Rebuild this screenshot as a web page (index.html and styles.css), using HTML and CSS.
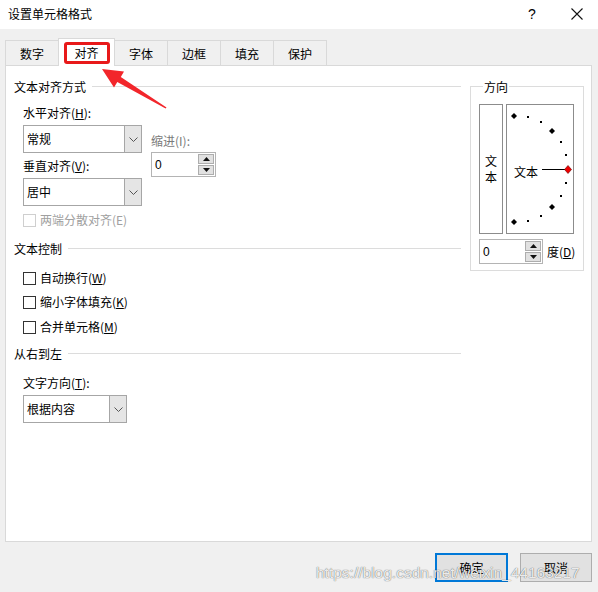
FILE: index.html
```html
<!DOCTYPE html>
<html lang="zh-CN">
<head>
<meta charset="utf-8">
<title>设置单元格格式</title>
<link rel="stylesheet" href="styles.css">
</head>
<body>
<div class="window">
  <div class="titlebar">
    <span class="title">设置单元格格式</span>
    <span class="help">?</span>
    <svg class="close" width="12" height="12" viewBox="0 0 12 12"><path d="M0.5 0.5 L11.5 11.5 M11.5 0.5 L0.5 11.5" stroke="#111" stroke-width="1.1" fill="none"/></svg>
  </div>

  <div class="tabs">
    <div class="tab">数字</div>
    <div class="tab active"><span class="mark">对齐</span></div>
    <div class="tab">字体</div>
    <div class="tab">边框</div>
    <div class="tab">填充</div>
    <div class="tab">保护</div>
  </div>

  <div class="panel">
    <div class="left">
      <div class="group-head"><span>文本对齐方式</span><i></i></div>
      <div class="align-block">
        <div class="col">
          <div class="lbl">水平对齐(<u>H</u>):</div>
          <div class="select sel-wide"><span class="val">常规</span><span class="drop"><svg width="9" height="5" viewBox="0 0 9 5"><path d="M0.5 0.5 L4.5 4.5 L8.5 0.5" stroke="#555" fill="none"/></svg></span></div>
          <div class="lbl lbl-gap">垂直对齐(<u>V</u>):</div>
          <div class="select sel-wide"><span class="val">居中</span><span class="drop"><svg width="9" height="5" viewBox="0 0 9 5"><path d="M0.5 0.5 L4.5 4.5 L8.5 0.5" stroke="#555" fill="none"/></svg></span></div>
        </div>
        <div class="indent">
          <div class="lbl muted">缩进(I):</div>
          <div class="spin spin-indent">
            <span class="val">0</span>
            <span class="spin-btns">
              <span class="sbtn"><svg width="7" height="4" viewBox="0 0 7 4"><path d="M0 4 L3.5 0 L7 4 Z" fill="#111"/></svg></span>
              <span class="sbtn"><svg width="7" height="4" viewBox="0 0 7 4"><path d="M0 0 L3.5 4 L7 0 Z" fill="#111"/></svg></span>
            </span>
          </div>
        </div>
      </div>
      <div class="check disabled first-check"><span class="box"></span><span>两端分散对齐(E)</span></div>

      <div class="group-head head2"><span>文本控制</span><i></i></div>
      <div class="check c1"><span class="box"></span><span>自动换行(<u>W</u>)</span></div>
      <div class="check c2"><span class="box"></span><span>缩小字体填充(<u>K</u>)</span></div>
      <div class="check c3"><span class="box"></span><span>合并单元格(<u>M</u>)</span></div>

      <div class="group-head head3"><span>从右到左</span><i></i></div>
      <div class="lbl lbl-t">文字方向(<u>T</u>):</div>
      <div class="select sel-narrow"><span class="val">根据内容</span><span class="drop"><svg width="9" height="5" viewBox="0 0 9 5"><path d="M0.5 0.5 L4.5 4.5 L8.5 0.5" stroke="#555" fill="none"/></svg></span></div>
    </div>

    <div class="orient">
      <div class="orient-title">方向</div>
      <div class="orient-boxes">
        <div class="vbox"><span>文</span><span>本</span></div>
        <div class="dial">
          <svg width="66" height="128" viewBox="0 0 66 128">
            <g fill="#000">
              <path d="M7 8 L10 11 L7 14 L4 11 Z"/>
              <path d="M45 23 L48 26 L45 29 L42 26 Z"/>
              <path d="M45 99 L48 102 L45 105 L42 102 Z"/>
              <path d="M7 114 L10 117 L7 120 L4 117 Z"/>
              <rect x="20" y="11" width="2" height="2"/>
              <rect x="33" y="16" width="2" height="2"/>
              <rect x="53" y="36" width="2" height="2"/>
              <rect x="58" y="49" width="2" height="2"/>
              <rect x="58" y="77" width="2" height="2"/>
              <rect x="53" y="90" width="2" height="2"/>
              <rect x="33" y="110" width="2" height="2"/>
              <rect x="20" y="115" width="2" height="2"/>
            </g>
            <line x1="35" y1="64.5" x2="59" y2="64.5" stroke="#000" stroke-width="1"/>
            <path d="M61 60.5 L64.5 64.5 L61 68.5 L57.5 64.5 Z" fill="#e00" stroke="#600" stroke-width="0.6"/>
            <text x="7" y="72" class="dial-text">文本</text>
          </svg>
        </div>
      </div>
      <div class="deg-row">
        <div class="spin spin-deg">
          <span class="val">0</span>
          <span class="spin-btns">
            <span class="sbtn"><svg width="7" height="4" viewBox="0 0 7 4"><path d="M0 4 L3.5 0 L7 4 Z" fill="#111"/></svg></span>
            <span class="sbtn"><svg width="7" height="4" viewBox="0 0 7 4"><path d="M0 0 L3.5 4 L7 0 Z" fill="#111"/></svg></span>
          </span>
        </div>
        <span class="deg-lbl">度(<u>D</u>)</span>
      </div>
    </div>
  </div>

  <div class="footer">
    <button class="btn primary">确定</button>
    <button class="btn">取消</button>
  </div>

  <div class="watermark">https://blog.csdn.net/weixin_44163217</div>

  <svg class="arrow" width="598" height="592" viewBox="0 0 598 592">
    <polygon points="102,69 124,71.5 120.8,77 166.5,107.5 165.6,108.6 117.3,82 114,87.5" fill="#f2262b"/>
  </svg>
</div>
</body>
</html>
```
FILE: styles.css
```css
* { box-sizing: border-box; }
body {
  margin: 0;
  font-family: "Noto Sans CJK SC", "Microsoft YaHei", sans-serif;
  font-size: 12px;
  color: #000;
}
u { text-decoration: underline; text-underline-offset: 1px; }

.window {
  position: relative;
  width: 598px;
  height: 592px;
  background: #f0f0f0;
  overflow: hidden;
}

/* title bar */
.titlebar {
  height: 29px;
  background: #fff;
  display: flex;
  align-items: center;
  padding-left: 8px;
  padding-right: 15px;
}
.title { flex: 1; line-height: 16px; margin-top: -1px; }
.help {
  font-family: "Liberation Sans", sans-serif;
  font-size: 14px;
  line-height: 16px;
  width: 8px;
  margin-right: 35px;
  margin-top: -2px;
}
.close { display: block; margin-top: -2px; }

/* tabs */
.tabs {
  height: 36px;
  display: flex;
  align-items: flex-end;
  padding-left: 5px;
}
.tab {
  height: 25px;
  width: 54px;
  margin-right: -1px;
  border: 1px solid #d9d9d9;
  border-bottom: none;
  background: #f0f0f0;
  display: flex;
  align-items: center;
  justify-content: center;
  line-height: 16px;
  padding-top: 1px;
}
.tab.active {
  position: relative;
  z-index: 2;
  height: 28px;
  width: 57px;
  margin-bottom: -1px;
  background: #fff;
  align-items: flex-start;
  padding-top: 3px;
}
.mark {
  display: flex;
  align-items: center;
  justify-content: center;
  width: 46px;
  height: 22px;
  border: 3px solid #e8191a;
  border-radius: 3px;
}

/* panel */
.panel {
  margin: 0 6px 0 5px;
  height: 477px;
  border: 1px solid #d9d9d9;
  background: #fff;
  display: flex;
  align-items: flex-start;
  padding: 13px 7px 0 8px;
}
.left { width: 447px; }

.group-head {
  display: flex;
  align-items: center;
  line-height: 16px;
}
.group-head i {
  flex: 1;
  height: 1px;
  background: #dcdcdc;
  margin-left: 6px;
  margin-top: -1px;
}
.head2 { margin-top: 13px; }
.head3 { margin-top: 11px; }

.lbl { line-height: 16px; }
.lbl-gap { margin-top: 5px; }
.muted { color: #7a7a7a; }

.align-block {
  display: flex;
  align-items: flex-start;
  margin: 10px 0 0 9px;
}
.col { width: 119px; }
.indent { margin-left: 9px; padding-top: 28px; }

.select {
  margin-top: 4px;
  height: 28px;
  border: 1px solid #a6a6a6;
  background: #fff;
  display: flex;
  align-items: stretch;
}
.sel-wide { width: 119px; }
.sel-narrow { width: 104px; margin-left: 9px; }
.select .val {
  flex: 1;
  padding-left: 3px;
  display: flex;
  align-items: center;
  line-height: 16px;
}
.select .drop {
  width: 17px;
  border-left: 1px solid #a6a6a6;
  background: #e5e5e5;
  display: flex;
  align-items: center;
  justify-content: center;
}
.select .drop svg { display: block; }

.spin {
  height: 25px;
  border: 1px solid #b4b4b4;
  background: #fff;
  display: flex;
  align-items: stretch;
  padding: 1px;
}
.spin-indent { width: 65px; margin-top: 3px; }
.spin-deg { width: 64px; }
.spin .val {
  flex: 1;
  padding-left: 2px;
  display: flex;
  align-items: center;
  font-family: "Liberation Sans", sans-serif;
  font-size: 12px;
}
.spin-btns {
  width: 16px;
  display: flex;
  flex-direction: column;
  gap: 1px;
}
.sbtn {
  flex: 1;
  border: 1px solid #adadad;
  background: #e1e1e1;
  display: flex;
  align-items: center;
  justify-content: center;
}
.sbtn svg { display: block; }

/* checkboxes */
.check {
  display: flex;
  align-items: center;
  line-height: 16px;
  margin-left: 9px;
}
.check .box {
  width: 13px;
  height: 13px;
  border: 1px solid #333;
  background: #fff;
  margin-right: 4px;
}
.check.disabled { color: #a0a0a0; }
.check.disabled .box { border-color: #cfcfcf; }
.first-check { margin-top: 6px; }
.c1 { margin-top: 13px; }
.c2 { margin-top: 8px; }
.c3 { margin-top: 9px; }
.lbl-t { margin: 13px 0 0 9px; }

/* orientation group */
.orient {
  width: 114px;
  margin-left: 9px;
  margin-top: 7px;
  border: 1px solid #dcdcdc;
  padding: 0 0 6px 8px;
}
.orient-title {
  width: fit-content;
  margin: -8px 0 0 4px;
  padding: 0 1px;
  background: #fff;
  line-height: 16px;
}
.orient-boxes {
  display: flex;
  gap: 3px;
  margin-top: 9px;
}
.vbox {
  width: 24px;
  height: 130px;
  border: 1px solid #8c8c8c;
  display: flex;
  flex-direction: column;
  align-items: center;
  justify-content: center;
  line-height: 16px;
}
.dial {
  width: 68px;
  height: 130px;
  border: 1px solid #8c8c8c;
}
.dial svg { display: block; }
.dial-text { font-family: "Noto Sans CJK SC", sans-serif; font-size: 12px; }

.deg-row {
  display: flex;
  align-items: center;
  margin-top: 5px;
}
.deg-lbl { margin-left: 4px; line-height: 16px; }

/* footer */
.footer {
  display: flex;
  justify-content: flex-end;
  gap: 12px;
  padding: 11px 6px 0 0;
}
.btn {
  font-family: "Noto Sans CJK SC", sans-serif;
  font-size: 12px;
  color: #000;
  height: 29px;
  width: 72px;
  background: #e1e1e1;
  border: 1px solid #adadad;
  padding: 0;
}
.btn.primary {
  width: 73px;
  border: 2px solid #0078d7;
}

.watermark {
  position: absolute;
  left: 316px;
  top: 563px;
  font-family: "Liberation Sans", sans-serif;
  font-size: 15.5px;
  line-height: 20px;
  color: rgba(255, 255, 255, 0.9);
  text-shadow: 0 0 1px rgba(0, 0, 0, 0.5), 0 0 1px rgba(0, 0, 0, 0.35);
  white-space: nowrap;
  pointer-events: none;
}

.arrow {
  position: absolute;
  left: 0;
  top: 0;
  pointer-events: none;
}
```
